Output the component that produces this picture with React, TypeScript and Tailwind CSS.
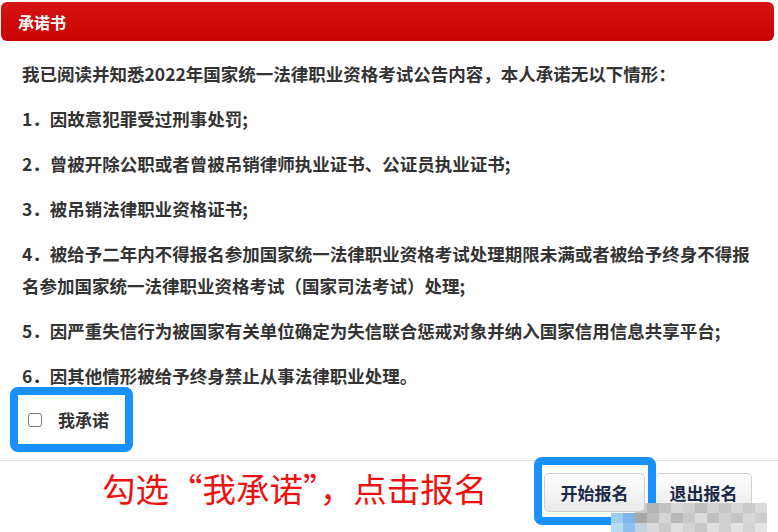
import React from "react";

const items = [
  "1．因故意犯罪受过刑事处罚;",
  "2．曾被开除公职或者曾被吊销律师执业证书、公证员执业证书;",
  "3．被吊销法律职业资格证书;",
  "4．被给予二年内不得报名参加国家统一法律职业资格考试处理期限未满或者被给予终身不得报名参加国家统一法律职业资格考试（国家司法考试）处理;",
  "5．因严重失信行为被国家有关单位确定为失信联合惩戒对象并纳入国家信用信息共享平台;",
  "6．因其他情形被给予终身禁止从事法律职业处理。",
];

// 马赛克水印
const mosaic = [
  ["#ffffff", "#ffffff", "#c8c8c8", "#b4b4b4", "#c2c2c2", "#d8d8d8", "#cfcfcf", "#bdbdbd", "#d2d2d2", "#c6c6c6", "#d6d6d6", "#cbcbcb", "#dadada"],
  ["#9fcdf2", "#7fb8e8", "#a8a8a8", "#bcbcbc", "#d4d4d4", "#b8b8b8", "#c9c9c9", "#dcdcdc", "#c0c0c0", "#d0d0d0", "#c4c4c4", "#d8d8d8", "#cdcdcd"],
  ["#b7daf5", "#8ec2ec", "#c3d3e0", "#d9d9d9", "#cacaca", "#e0e0e0", "#d3d3d3", "#c7c7c7", "#dedede", "#d1d1d1", "#e2e2e2", "#d5d5d5", "#e4e4e4"],
];

const font = { fontFamily: '"Noto Sans CJK SC", "Noto Sans", sans-serif' };

export default function App() {
  return (
    <div className="relative w-[778px] h-[532px] overflow-hidden bg-white" style={font}>
      {/* 标题栏 */}
      <div className="ml-[1px] mr-[4px] mt-[2px] h-[39px] rounded-[6px] bg-gradient-to-b from-[#d61414] to-[#c80000] flex items-center pl-[17px]">
        <span className="text-white text-[16px] font-bold">承诺书</span>
      </div>

      {/* 承诺内容 */}
      <div className="pt-[17px] px-[22px] flex flex-col gap-[13px] text-[17.5px] font-bold leading-[32px] text-[#333333]">
        <p>我已阅读并知悉2022年国家统一法律职业资格考试公告内容，本人承诺无以下情形：</p>
        {items.map((t) => (
          <p key={t}>{t}</p>
        ))}
      </div>

      {/* 我承诺 */}
      <div className="ml-[10px] mt-[-5px] w-[123px] h-[65px] rounded-[8px] border-[8px] border-[#1890ff] flex items-center pl-[10px]">
        <span className="w-[14px] h-[14px] rounded-[3px] border border-[#767676] bg-white" />
        <span className="ml-[16px] text-[17px] font-bold text-[#333333]">我承诺</span>
      </div>

      {/* 底部 */}
      <div className="mt-[8px] border-t border-[#e6e6e6] h-[72px] flex items-start">
        <div className="ml-[102px] mt-[2px] text-[33.5px] leading-[50px] text-[#ee1111]">勾选“我承诺”，点击报名</div>
        <div className="ml-auto mr-[26px] mt-[12px] flex gap-[10px]">
          <div className="relative">
            <button className="relative z-10 w-[101px] h-[39px] rounded-[5px] border border-[#cfcfcf] bg-gradient-to-b from-[#ffffff] to-[#e9e9e9] text-[17px] font-bold text-[#1a2947]">
              开始报名
            </button>
            <div className="absolute left-[-10px] right-[-11px] top-[-16px] bottom-[-13px] rounded-[8px] border-[8px] border-[#1890ff]" />
          </div>
          <button className="w-[97px] h-[39px] rounded-[5px] border border-[#cfcfcf] bg-gradient-to-b from-[#ffffff] to-[#e9e9e9] text-[17px] font-bold text-[#1a2947]">
            退出报名
          </button>
        </div>
      </div>

      {/* 水印 */}
      <div className="absolute left-[611px] top-[503px] flex flex-col">
        {mosaic.map((row, i) => (
          <div key={i} className="flex">
            {row.map((c, j) => (
              <div key={j} className="w-[12px] h-[10px]" style={{ backgroundColor: c }} />
            ))}
          </div>
        ))}
      </div>
    </div>
  );
}
